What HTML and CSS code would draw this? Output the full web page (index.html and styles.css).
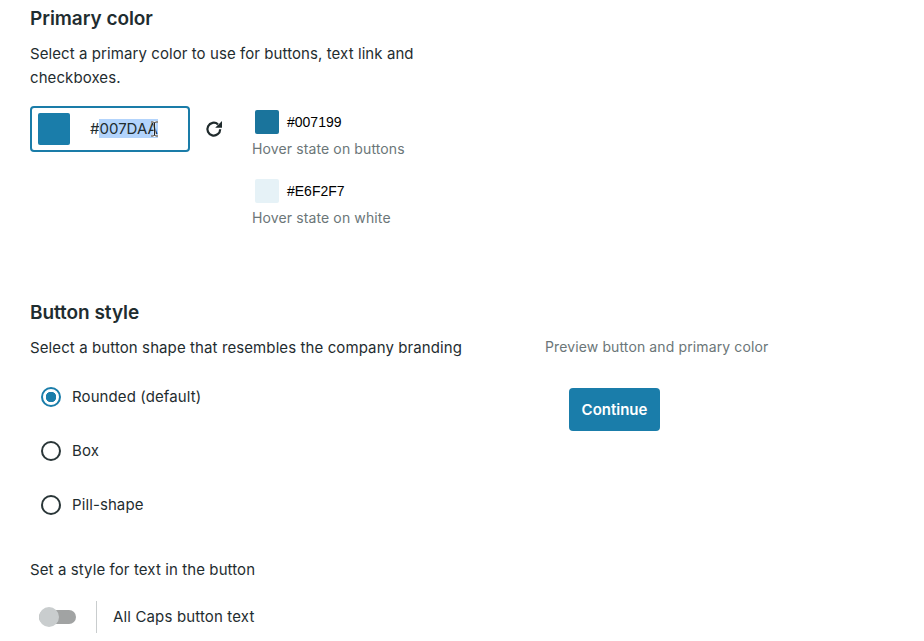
FILE: index.html
```html
<!DOCTYPE html>
<html lang="en">
<head>
<meta charset="utf-8">
<title>Branding</title>
<link rel="stylesheet" href="styles.css">
</head>
<body>
<main class="page">
  <section class="primary">
    <h2 class="title">Primary color</h2>
    <p class="desc">Select a primary color to use for buttons, text link and checkboxes.</p>
    <div class="color-row">
      <div class="color-input">
        <span class="swatch-lg"></span>
        <span class="hex">#<span class="sel">007DAA</span>
          <svg class="ibeam" width="9" height="16" viewBox="0 0 9 16"><path d="M1 1h2.500l1 1 1-1H8M4.500 2v12M1 15h2.500l1-1 1 1H8" fill="none" stroke="#fff" stroke-width="1.800"/><path d="M1 1h2.500l1 1 1-1H8M4.500 2v12M1 15h2.500l1-1 1 1H8" fill="none" stroke="#222" stroke-width="1"/></svg>
        </span>
      </div>
      <svg class="reset" width="18" height="18" viewBox="0 0 18 18"><path d="M15.200 9.200A6.400 6.400 0 1 1 13 4.300" fill="none" stroke="#1f2a2c" stroke-width="2.200"/><path d="M17 1v6.800h-6.800z" fill="#1f2a2c"/></svg>
      <div class="states">
        <div class="state state-first">
          <div class="state-head"><span class="swatch-sm dark"></span><span class="code">#007199</span></div>
          <div class="note">Hover state on buttons</div>
        </div>
        <div class="state">
          <div class="state-head"><span class="swatch-sm light"></span><span class="code">#E6F2F7</span></div>
          <div class="note">Hover state on white</div>
        </div>
      </div>
    </div>
  </section>
  <section class="button-style">
    <h2 class="title">Button style</h2>
    <div class="style-columns">
      <div class="style-left">
        <p class="desc-one">Select a button shape that resembles the company branding</p>
        <div class="radios">
          <div class="radio-row"><span class="radio on"></span><span class="radio-label">Rounded (default)</span></div>
          <div class="radio-row"><span class="radio"></span><span class="radio-label">Box</span></div>
          <div class="radio-row"><span class="radio"></span><span class="radio-label">Pill-shape</span></div>
        </div>
      </div>
      <div class="style-right">
        <div class="note preview-note">Preview button and primary color</div>
        <button class="cta" type="button">Continue</button>
      </div>
    </div>
    <p class="desc-one text-style">Set a style for text in the button</p>
    <div class="toggle-row">
      <span class="toggle"><span class="knob"></span></span>
      <span class="divider"></span>
      <span class="toggle-label">All Caps button text</span>
    </div>
  </section>
</main>
</body>
</html>
```
FILE: styles.css
```css
* { box-sizing: border-box; }
html, body { margin: 0; height: 100%; background: #fff; overflow: hidden; }
body { font-family: Inter, "Liberation Sans", sans-serif; color: #1f2d30; font-size: 15px; letter-spacing: .1px; }
.page { padding: 7px 0 0 30px; }
.title { margin: 0; font-size: 19px; line-height: 24px; font-weight: 600; letter-spacing: -.05px; color: #1f2d30; }
.desc { margin: 11px 0 0; width: 420px; line-height: 24px; font-size: 15px; letter-spacing: .08px; }
.desc-one { margin: 0; line-height: 20px; font-size: 15px; }
.color-row { display: flex; align-items: flex-start; margin-top: 16px; }
.color-input { width: 160px; height: 46px; border: 2px solid #1a7ca8; border-radius: 4px; display: flex; align-items: center; padding-left: 6px; }
.swatch-lg { width: 32px; height: 32px; border-radius: 2px; background: #1a7daa; flex: none; }
.hex { position: relative; margin-left: 20px; font-size: 15px; line-height: 20px; letter-spacing: 0; color: #1f2d30; white-space: nowrap; }
.sel { background: #b3d4fc; margin-left: -1px; padding-left: 1px; }
.ibeam { position: absolute; left: 60px; top: 2px; }
.reset { margin: 14px 0 0 15px; flex: none; }
.states { margin: 4px 0 0 29px; }
.state-head { display: flex; align-items: center; margin-left: 3px; }
.swatch-sm { width: 24px; height: 24px; border-radius: 2px; flex: none; }
.dark { background: #1a749c; }
.light { background: #e6f2f7; }
.code { margin-left: 8px; font-family: "Liberation Sans", Arial, sans-serif; font-size: 14px; letter-spacing: 0; color: #000; }
.note { color: #6b7678; font-size: 14px; line-height: 20px; letter-spacing: .12px; }
.state-head + .note { margin-top: 5px; }
.state-first { margin-bottom: 20px; }
.button-style { margin-top: 73px; }
.style-columns { display: flex; margin-top: 13px; }
.style-left { width: 515px; }
.radios { margin-top: 12px; }
.radio-row { display: flex; align-items: center; height: 54px; padding-left: 11px; }
.radio-label { padding-bottom: 2px; }
.radio { width: 20px; height: 20px; border: 2px solid #2a3638; border-radius: 50%; margin-right: 11px; flex: none; }
.radio.on { border-color: #1a7daa; background: radial-gradient(circle, #1a7daa 0 5px, #fff 5.500px); }
.preview-note { padding-bottom: 2px; height: 20px; line-height: 18px; }
.cta { display: block; margin: 30px 0 0 24px; width: 91px; height: 43px; border: 0; border-radius: 4px; background: #1a7daa; color: #fff; font: 600 15px Inter, "Liberation Sans", sans-serif; }
.text-style { margin-top: 28px; }
.toggle-row { display: flex; align-items: center; margin-top: 21px; height: 32px; }
.toggle { position: relative; width: 37px; height: 14px; margin-left: 9px; background: #a1a3a3; border-radius: 7px; flex: none; }
.knob { position: absolute; left: 0; top: -3px; width: 20px; height: 20px; border-radius: 50%; background: #c9cdce; }
.divider { width: 1px; height: 32px; background: #c9cdce; margin: 0 16px 0 20px; }
.toggle-label { padding-bottom: 2px; letter-spacing: .15px; }
```
